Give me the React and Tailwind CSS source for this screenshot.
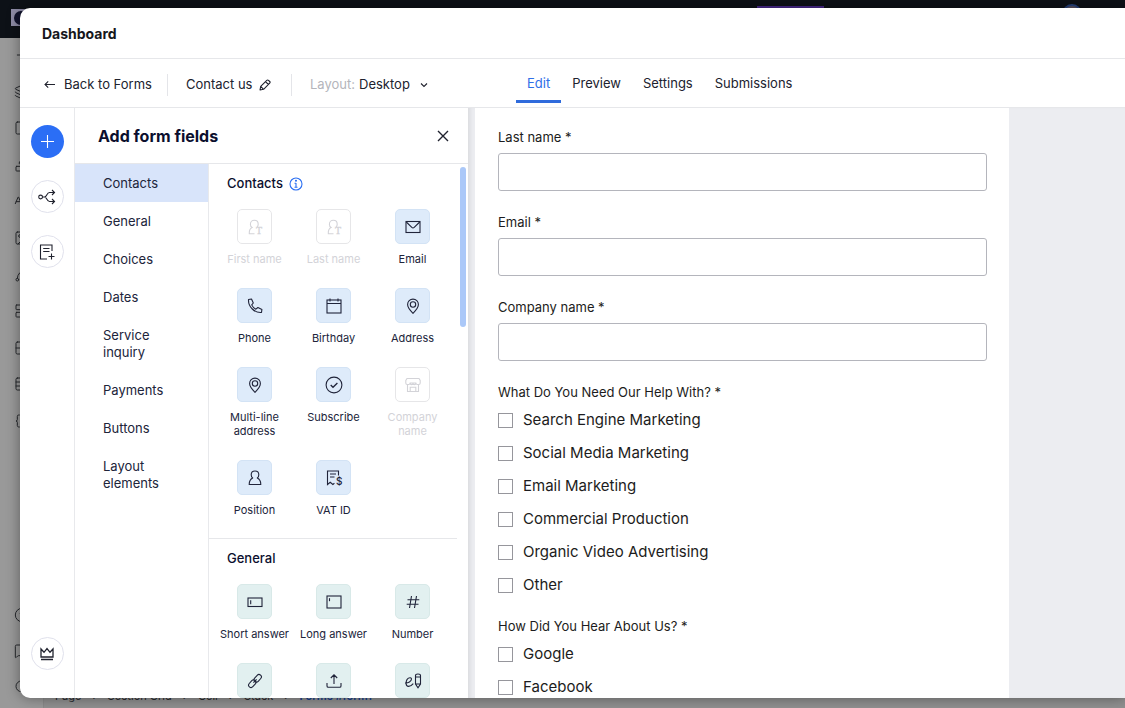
// src/App.jsx

import React, { useState } from "react";
import {
  Layers,
  Square,
  Shapes,
  ALargeSmall,
  Image,
  Spline,
  LayoutGrid,
  Grid2x2,
  Table,
  Braces,
  Minus,
  CircleHelp,
  MessageSquare,
  Search,
} from "lucide-react";

const Icon = ({ size = 18, children, className = "" }) => (
  <svg
    width={size}
    height={size}
    viewBox={`0 0 ${size} ${size}`}
    fill="none"
    stroke="currentColor"
    strokeWidth="1.1"
    className={`shrink-0 ${className}`}
    aria-hidden="true"
  >
    {children}
  </svg>
);

const PersonTextIcon = () => (
  <Icon>
    <path d="M8.5 15.800H3.300c-.2-3.200.8-5.400 2.800-6.300C4.900 8.800 4.400 7.500 4.400 6.200 4.400 3.800 6 2.300 8.300 2.300s3.900 1.500 3.900 3.900c0 1-.3 1.900-1 2.600" />
    <text x="10" y="16.300" fontSize="10" fill="currentColor" stroke="currentColor" strokeWidth=".3" fontFamily="Liberation Serif, serif">
      T
    </text>
  </Icon>
);

const EmailIcon = () => (
  <Icon>
    <rect x="2" y="3.500" width="14" height="11" />
    <path d="M2.300 4l5.500 5.300c.7.600 1.700.600 2.400 0L15.700 4" />
  </Icon>
);

const PhoneIcon = () => (
  <Icon>
    <path d="M2.500 2.500l3-.500 1.800 4-1.600 1.900c.8 1.800 2.300 3.400 4.200 4.300l2-1.700 4 1.900-.4 3.100c-6.800.6-13.400-5.600-13-13z" strokeLinejoin="round" />
  </Icon>
);

const CalendarIcon = () => (
  <Icon>
    <rect x="2" y="3" width="14" height="13" />
    <path d="M2 6.500h14M5 1.500v3M13 1.500v3" />
  </Icon>
);

const PinIcon = () => (
  <Icon>
    <path d="M9 16.300C6 13.300 3.600 10.600 3.600 7.500a5.400 5.400 0 0 1 10.800 0c0 3.100-2.400 5.800-5.400 8.800z" />
    <circle cx="9" cy="7.500" r="2.700" />
  </Icon>
);

const CheckCircleIcon = () => (
  <Icon>
    <circle cx="9" cy="9" r="7.900" />
    <path d="M5.700 9l2.300 2.300 4.400-4.300" strokeWidth="1.300" />
  </Icon>
);

const StoreIcon = () => (
  <Icon>
    <path d="M3 2.500h12l1.200 2V7c0 .9-.7 1.500-1.500 1.500h-1.400c-.9 0-1.500-.6-1.500-1.500H6.200c0 .9-.6 1.500-1.500 1.500H3.300C2.500 8.500 1.800 7.900 1.800 7V4.500z" />
    <path d="M3.500 8.500v7h11v-7M6.200 7c0 2.200 2.800 2.200 2.800 0 0 2.200 2.800 2.200 2.800 0M6.200 15.500v-4.300h5.600v4.300" />
  </Icon>
);

const PositionIcon = () => (
  <Icon>
    <path d="M6.700 9C5.500 8.200 5.200 7.100 5.200 5.800 5.200 3.500 6.800 2 9 2s3.800 1.500 3.800 3.800c0 1.300-.3 2.400-1.500 3.200 2.400 1.100 3.500 3.300 3.500 6.500H3.200c0-3.200 1.100-5.400 3.500-6.500z" strokeLinejoin="round" />
  </Icon>
);

const VatIcon = () => (
  <Icon>
    <path d="M13.500 6.500V2h-11v13.500l2.700-2.200 2.700 2.200 1.500-1.200M5 5h6M5 8h4.500" />
    <text x="11" y="15.900" fontSize="10" fill="currentColor" stroke="none" fontWeight="500">
      $
    </text>
  </Icon>
);

const ShortAnswerIcon = () => (
  <Icon>
    <rect x="2" y="5" width="14" height="8.500" />
    <path d="M4.700 7.300v4" />
  </Icon>
);

const LongAnswerIcon = () => (
  <Icon>
    <rect x="2" y="3" width="14" height="12" />
    <path d="M4.500 5.200v3" />
  </Icon>
);

const NumberIcon = () => (
  <Icon>
    <path d="M7.500 3L5.500 15M12.500 3l-2 12M3.500 6.800h11.800M2.700 11.200h11.800" />
  </Icon>
);

const LinkIcon = () => (
  <Icon>
    <rect x="-4.300" y="-2.400" width="8.600" height="4.800" rx="2.400" transform="translate(11.700 6.300) rotate(-48)" />
    <rect x="-4.300" y="-2.400" width="8.600" height="4.800" rx="2.400" transform="translate(6.300 11.700) rotate(-48)" />
    <path d="M7.400 10.600l3.200-3.200" />
  </Icon>
);

const UploadIcon = () => (
  <Icon>
    <path d="M9 12V3M5.800 6L9 2.800 12.200 6M2 11v3c0 .8.500 1.300 1.300 1.300h11.400c.8 0 1.300-.5 1.300-1.300v-3" />
  </Icon>
);

const SignatureIcon = () => (
  <Icon>
    <path d="M1 11c3.200.3 6.500-1.700 6.500-3.900 0-1.100-.9-1.600-1.900-1.300C3.500 6.300 2.100 9 2.100 11.500c0 1.900 1 2.900 2.500 2.900 1.800 0 3.200-1.100 4.700-2.800" />
    <path d="M11.500 3.500c0-1 .8-1.500 2.500-1.500s2.500.5 2.500 1.500v8.500L14 15.800 11.500 12zM11.500 5h5M11.500 12h5" />
  </Icon>
);

const BranchIcon = () => (
  <Icon>
    <circle cx="2.600" cy="9" r="1.900" />
    <path d="M4.500 9h2c2.500 0 2-4.500 5-4.500h5M6.500 9c2.500 0 2 4.500 5 4.500h5M14 2l2.500 2.500L14 7M14 11l2.500 2.500L14 16" />
  </Icon>
);

const AddPageIcon = () => (
  <Icon>
    <path d="M14 8V2H2.500v14H9M5.200 5.500h6.300M5.200 8.500h6.300M13.500 10.500v6M10.500 13.500h6" />
  </Icon>
);

const CrownIcon = () => (
  <Icon>
    <path d="M3 12V4l3 3.300 3-3.800 3 3.800L15 4v8zM3 14.500h12" strokeWidth="1.300" />
  </Icon>
);

const categories = [
  "Contacts",
  "General",
  "Choices",
  "Dates",
  "Service inquiry",
  "Payments",
  "Buttons",
  "Layout elements",
];

const contactFields = [
  { label: "First name", icon: PersonTextIcon, disabled: true },
  { label: "Last name", icon: PersonTextIcon, disabled: true },
  { label: "Email", icon: EmailIcon },
  { label: "Phone", icon: PhoneIcon },
  { label: "Birthday", icon: CalendarIcon },
  { label: "Address", icon: PinIcon },
  { label: "Multi-line address", icon: PinIcon },
  { label: "Subscribe", icon: CheckCircleIcon },
  { label: "Company name", icon: StoreIcon, disabled: true },
  { label: "Position", icon: PositionIcon },
  { label: "VAT ID", icon: VatIcon },
];

const generalFields = [
  { label: "Short answer", icon: ShortAnswerIcon },
  { label: "Long answer", icon: LongAnswerIcon },
  { label: "Number", icon: NumberIcon },
  { name: "Link", icon: LinkIcon },
  { name: "File upload", icon: UploadIcon },
  { name: "Signature", icon: SignatureIcon },
];

const textFields = ["Last name *", "Email *", "Company name *"];

const helpOptions = [
  "Search Engine Marketing",
  "Social Media Marketing",
  "Email Marketing",
  "Commercial Production",
  "Organic Video Advertising",
  "Other",
];

const sourceOptions = ["Google", "Facebook"];

const tabs = ["Edit", "Preview", "Settings", "Submissions"];

const editorTools = [Minus, Layers, Square, Shapes, ALargeSmall, Image, Spline, LayoutGrid, Grid2x2, Table, Braces];
const editorHelp = [CircleHelp, MessageSquare, Search];

// The site editor that stays dimmed behind the dashboard window
const EditorBackdrop = () => (
  <div className="flex h-full flex-col bg-[#999999] text-[#26282c]" aria-hidden="true">
    <div className="flex h-[38px] shrink-0 items-start justify-between bg-[#0d1117] pl-[11px]">
      <div className="mt-[9px] flex h-[17px] w-[17px] items-center justify-end bg-[#8d8ba6]">
        <div className="h-[14px] w-[14px] rounded-full bg-[#10122c]" />
      </div>
      <div className="flex w-[368px] items-start justify-between pr-[43px]">
        <div className="mt-[6px] h-6 w-[67px] bg-[#47288a]" />
        <div className="mt-1 h-5 w-5 rounded-full border-2 border-[#24407c] bg-[#5b5260]" />
      </div>
    </div>
    <div className="flex min-h-0 flex-1">
      <div className="flex w-11 shrink-0 flex-col justify-between border-r border-[#8a8a8a] pt-[9px] pb-[13px] pl-[14px]">
        <div className="flex h-[382px] flex-col justify-between">
          {editorTools.map((Tool, idx) => (
            <Tool key={idx} size={16} strokeWidth={1.5} />
          ))}
        </div>
        <div className="flex h-[88px] flex-col justify-between">
          {editorHelp.map((Tool, idx) => (
            <Tool key={idx} size={16} strokeWidth={1.5} />
          ))}
        </div>
      </div>
      <div className="flex flex-1 items-end bg-[#909090]">
        <div className="flex h-6 items-center gap-[11px] pl-[11px] text-[11px]">
          <span>Page</span>
          <span>›</span>
          <span>Section Grid</span>
          <span>›</span>
          <span>Cell</span>
          <span>›</span>
          <span>Stack</span>
          <span>›</span>
          <span className="font-semibold text-[#153e8f]">Forms #form1</span>
        </div>
      </div>
    </div>
  </div>
);

const FieldTile = ({ field, tone }) => {
  const TileIcon = field.icon;
  const box = field.disabled ? "border-[#e6e6e8] bg-white" : tone;
  return (
    <button
      type="button"
      disabled={field.disabled}
      aria-label={field.name}
      className={`flex flex-col items-center gap-2 text-[11px] leading-[14px] ${
        field.disabled ? "text-[#d3d3d8]" : "text-[#20243a]"
      }`}
    >
      <span className={`flex h-[35px] w-[35px] items-center justify-center rounded-[5px] border ${box}`}>
        <TileIcon />
      </span>
      {field.label && <span className="max-w-[70px]">{field.label}</span>}
    </button>
  );
};

const FieldSection = ({ title, fields, tone, info }) => (
  <section className="pt-3">
    <h3 className="flex h-4 items-center gap-[6px] pl-[18px] text-[13px] font-medium text-[#0b0f2e]">
      {title}
      {info && (
        <Icon size={14} className="text-[#2b6ff2]">
          <circle cx="7" cy="7" r="6" />
          <path d="M7 6v4.300M5.500 6.300H7M5.500 10.300h3" />
          <circle cx="7" cy="3.800" r=".5" />
        </Icon>
      )}
    </h3>
    <div className="mt-[17px] grid grid-cols-3 items-start gap-y-[22px] pr-[5px] pl-[6px]">
      {fields.map((field) => (
        <FieldTile key={field.label || field.name} field={field} tone={tone} />
      ))}
    </div>
  </section>
);

const CheckboxGroup = ({ legend, options, checked, onToggle }) => (
  <fieldset className="mb-4">
    <legend className="mb-1 text-[13px] leading-4">{legend}</legend>
    {options.map((option) => (
      <label key={option} className="flex h-[33px] items-center gap-[10px] text-[15px]">
        <input
          type="checkbox"
          checked={!!checked[option]}
          onChange={() => onToggle(option)}
          className="h-[15px] w-[15px] shrink-0 appearance-none border border-[#96969c] bg-white checked:bg-[#2b6ff2]"
        />
        {option}
      </label>
    ))}
  </fieldset>
);

const App = () => {
  const [activeTab, setActiveTab] = useState("Edit");
  const [activeCategory, setActiveCategory] = useState("Contacts");
  const [checked, setChecked] = useState({});

  const toggleOption = (option) => {
    setChecked((prev) => ({ ...prev, [option]: !prev[option] }));
  };

  return (
    <div className="relative h-screen overflow-hidden font-['Inter',sans-serif]">
      <EditorBackdrop />

      <div className="absolute top-2 right-0 bottom-[10px] left-5 flex flex-col overflow-hidden rounded-l-[10px] bg-white text-[#20222e] shadow-[0_0_14px_rgba(0,0,0,0.4)]">
        <header className="flex h-[51px] shrink-0 items-center border-b border-[#e6e7ea] pl-[22px]">
          <h1 className="text-[14px] font-bold text-[#16171c]">Dashboard</h1>
        </header>

        <div className="flex h-[49px] shrink-0 items-center border-b border-[#e6e7ea] text-[13px]">
          <div className="flex w-[496px] shrink-0 items-center pt-[3px] pl-6">
            <button type="button" className="flex w-[123px] items-center gap-[9px]">
              <Icon size={11}>
                <path d="M11 5.500H1M4.200 2.300L1 5.500l3.200 3.200" />
              </Icon>
              Back to Forms
            </button>
            <button type="button" className="flex h-[22px] w-[124px] items-center gap-[7px] border-l border-[#e4e5e9] pl-[18px]">
              Contact us
              <Icon size={12}>
                <path d="M1 11l.7-3.600L7.800 1.300c.5-.500 1.200-.500 1.700 0l1.200 1.200c.5.500.5 1.200 0 1.700L4.600 10.300zM6.500 2.600l2.900 2.900M1.700 7.400l2.900 2.900" strokeLinejoin="round" />
              </Icon>
            </button>
            <div className="flex h-[22px] items-center border-l border-[#e4e5e9] pl-[18px]">
              <label htmlFor="layout" className="text-[#b4b5bb]">
                Layout:
              </label>
              <select id="layout" defaultValue="Desktop" className="ml-1 w-[61px] appearance-none bg-transparent">
                <option>Desktop</option>
                <option>Mobile</option>
              </select>
              <Icon size={8} className="pointer-events-none">
                <path d="M1 2.500l3 3 3-3" />
              </Icon>
            </div>
          </div>
          <nav className="flex h-full">
            {tabs.map((tab) => (
              <button
                key={tab}
                type="button"
                onClick={() => setActiveTab(tab)}
                className={`mb-1 border-b-3 px-[11px] pt-[9px] ${
                  activeTab === tab ? "border-[#2f6bdc] text-[#2f6fe8]" : "border-transparent"
                }`}
              >
                {tab}
              </button>
            ))}
          </nav>
        </div>

        <div className="flex min-h-0 flex-1">
          <aside className="flex w-[55px] shrink-0 flex-col items-center justify-between border-r border-[#e8e9ec] pt-[17px] pb-7">
            <div className="flex flex-col gap-[22px]">
              <button type="button" aria-label="Add" className="flex h-[33px] w-[33px] items-center justify-center rounded-full bg-[#2b6ef5] text-white">
                <Icon size={13}>
                  <path d="M6.500 0v13M0 6.500h13" />
                </Icon>
              </button>
              <button type="button" aria-label="Rules" className="flex h-[33px] w-[33px] items-center justify-center rounded-full border border-[#e0e1ec]">
                <BranchIcon />
              </button>
              <button type="button" aria-label="Pages" className="flex h-[33px] w-[33px] items-center justify-center rounded-full border border-[#e0e1ec]">
                <AddPageIcon />
              </button>
            </div>
            <button type="button" aria-label="Upgrade" className="flex h-[33px] w-[33px] items-center justify-center rounded-full border border-[#e0e1ec]">
              <CrownIcon />
            </button>
          </aside>

          <section className="flex w-[393px] shrink-0 flex-col">
            <div className="flex h-14 shrink-0 items-center justify-between border-b border-[#e6e7ea] pr-[19px] pl-[23px]">
              <h2 className="text-[16px] font-bold text-[#0b0f2e]">Add form fields</h2>
              <button type="button" aria-label="Close">
                <Icon size={12}>
                  <path d="M1 1l10 10M11 1L1 11" strokeWidth="1.400" />
                </Icon>
              </button>
            </div>
            <div className="flex min-h-0 flex-1">
              <nav className="w-[134px] shrink-0 border-r border-[#e8e9ec]">
                {categories.map((category) => (
                  <button
                    key={category}
                    type="button"
                    onClick={() => setActiveCategory(category)}
                    className={`block w-full pt-[11px] pr-8 pb-[10px] pl-7 text-left text-[13px] leading-[17px] text-[#20243a] ${
                      activeCategory === category ? "bg-[#d8e4fa]" : ""
                    }`}
                  >
                    {category}
                  </button>
                ))}
              </nav>
              <div className="min-w-0 flex-1 overflow-hidden">
                <FieldSection title="Contacts" fields={contactFields} tone="border-[#d3e3f5] bg-[#deebfa]" info />
                <div className="mt-[21px] border-t border-[#e6e7ea]" />
                <FieldSection title="General" fields={generalFields} tone="border-[#d8e9e8] bg-[#e2f0f0]" />
              </div>
              <div className="w-[11px] shrink-0 pt-[3px] pl-[3px]">
                <div className="h-[160px] w-[6px] rounded-full bg-[#abc8f8]" />
              </div>
            </div>
          </section>

          <main className="flex min-w-0 flex-1 bg-[#ecedf1] pr-[116px] pl-[7px] shadow-[inset_4px_0_4px_-2px_rgba(0,0,0,0.08)]">
            <form className="min-w-0 flex-1 overflow-hidden bg-white pt-[21px] pr-[22px] pl-[23px] text-[#1c1c20]">
              {textFields.map((name) => (
                <label key={name} className="mb-[23px] block text-[13px] leading-4">
                  {name}
                  <input type="text" className="mt-2 block h-[38px] w-full rounded-[3px] border border-[#b4b5bc] bg-white px-3" />
                </label>
              ))}
              <CheckboxGroup legend="What Do You Need Our Help With? *" options={helpOptions} checked={checked} onToggle={toggleOption} />
              <CheckboxGroup legend="How Did You Hear About Us? *" options={sourceOptions} checked={checked} onToggle={toggleOption} />
            </form>
          </main>
        </div>
      </div>
    </div>
  );
};

export default App;
